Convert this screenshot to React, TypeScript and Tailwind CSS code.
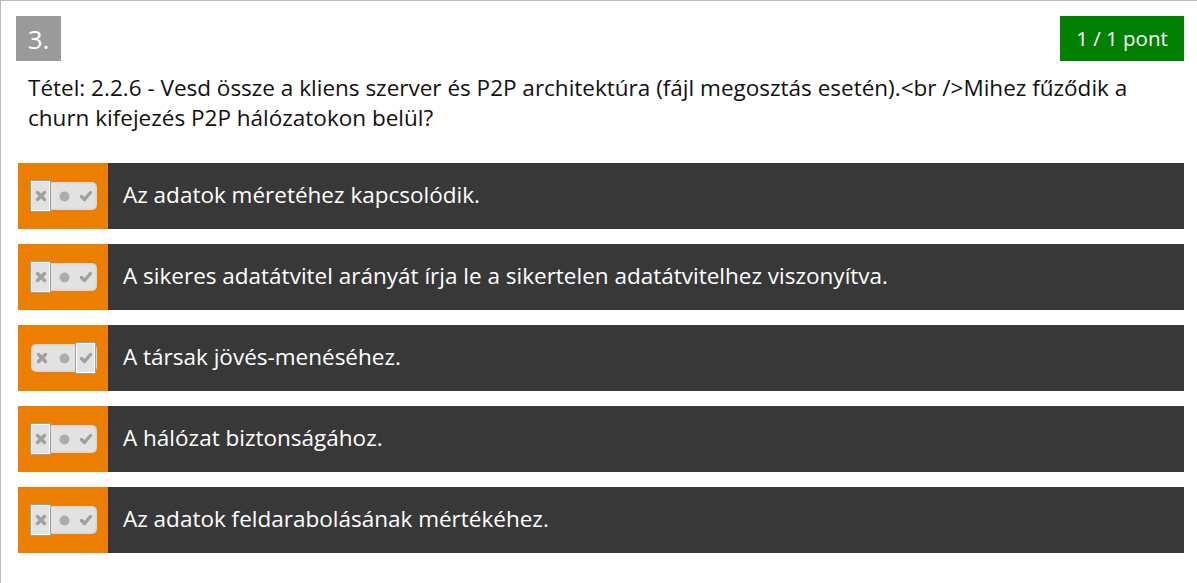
import React from "react";

const answers = [
  { text: "Az adatok méretéhez kapcsolódik.", sel: 0 },
  { text: "A sikeres adatátvitel arányát írja le a sikertelen adatátvitelhez viszonyítva.", sel: 0 },
  { text: "A társak jövés-menéséhez.", sel: 2 },
  { text: "A hálózat biztonságához.", sel: 0 },
  { text: "Az adatok feldarabolásának mértékéhez.", sel: 0 },
];

function XIcon() {
  return (
    <svg width="12" height="12" viewBox="0 0 12 12" className="blur-[0.4px]">
      <path d="M2.5 2.5 L9.5 9.5 M9.5 2.5 L2.5 9.5" stroke="#a0a0a0" strokeWidth="3.4" strokeLinecap="round" />
    </svg>
  );
}
function Dot() {
  return (
    <svg width="11" height="11" viewBox="0 0 11 11" className="blur-[0.4px]">
      <circle cx="5.5" cy="5.5" r="5" fill="#acacac" />
    </svg>
  );
}
function Check() {
  return (
    <svg width="14" height="12" viewBox="0 0 14 12" className="blur-[0.4px]">
      <path d="M2.5 6.5 L5.5 9.5 L11.5 2.5" stroke="#a0a0a0" strokeWidth="3.4" fill="none" strokeLinecap="round" strokeLinejoin="round" />
    </svg>
  );
}

function Toggle({ sel }: { sel: number }) {
  const icons = [<XIcon key="x" />, <Dot key="d" />, <Check key="c" />];
  return (
    <div className="relative w-[66px] h-[28px] rounded-[5px] bg-[#e2e2e2] shadow-[inset_0_0_3px_rgba(0,0,0,0.15)] flex items-center">
      {icons.map((ic, i) => (
        <div key={i} className="w-[22px] h-full flex items-center justify-center">
          {ic}
        </div>
      ))}
      <div
        className={`absolute top-[-2px] h-[32px] w-[21px] border border-[#a0a0a0] flex items-center justify-center ${sel === 0 ? "left-[-1px]" : "left-[44px]"}`}
      >
        <div className="w-full h-full border border-white bg-[#e2e2e2] flex items-center justify-center">
          {sel === 0 ? <XIcon /> : <Check />}
        </div>
      </div>
    </div>
  );
}

export default function App() {
  return (
    <div
      className="w-[1197px] h-[583px] bg-white border-l border-t border-[#bbbbbb] overflow-hidden"
      style={{ fontFamily: '"Open Sans", "Noto Sans", sans-serif' }}
    >
      <div className="pl-[15px] pr-[13px] pt-[15px]">
        <div className="flex justify-between items-start">
          <div className="w-[45px] h-[45px] bg-[#9a9a9a] text-white text-[26px] flex items-center justify-center leading-none">
            3.
          </div>
          <div className="w-[124px] h-[45px] bg-[#008000] text-white text-[20.5px] flex items-center justify-center leading-none">
            1 / 1 pont
          </div>
        </div>
        <div className="pl-[12px] pr-[40px] mt-[12px] text-[22.5px] leading-[30px] text-[#111]">
          Tétel: 2.2.6 - Vesd össze a kliens szerver és P2P architektúra (fájl megosztás esetén).&lt;br /&gt;Mihez fűződik a churn kifejezés P2P hálózatokon belül?
        </div>
        <div className="mt-[30px] pl-[2px] flex flex-col gap-[15px]">
          {answers.map((a, i) => (
            <div key={i} className="flex h-[66px]">
              <div className="w-[90px] bg-[#ec7f00] flex items-center pl-[13px]">
                <Toggle sel={a.sel} />
              </div>
              <div className="flex-1 bg-[#383838] text-white text-[22.5px] flex items-center pl-[15px] pb-[3px]">
                {a.text}
              </div>
            </div>
          ))}
        </div>
      </div>
    </div>
  );
}
